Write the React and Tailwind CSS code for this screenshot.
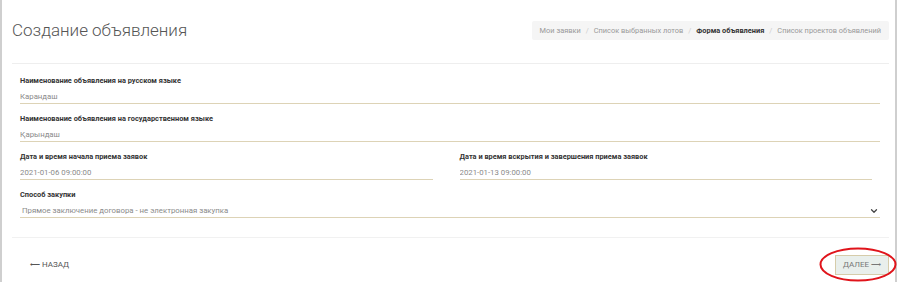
import { ChevronDown } from "lucide-react";

const FONT = { fontFamily: "Roboto, 'Noto Sans', sans-serif" };

const CRUMBS = [
  { label: "Мои заявки" },
  { label: "Список выбранных лотов" },
  { label: "Форма объявления", active: true },
  { label: "Список проектов объявлений" },
];

function Field({ label, value, children }) {
  return (
    <div className="flex flex-col">
      <div className="flex h-[12px] items-center text-[7.4px] font-bold text-[#333]">
        {label}
      </div>
      <div className="mt-[3px] flex h-[14px] items-center border-b border-[#ddd3b6] text-[7.8px] text-[#8a8a8a]">
        <span className="flex-1 truncate">{value}</span>
        {children}
      </div>
    </div>
  );
}

export default function App() {
  return (
    <div
      style={FONT}
      className="relative h-[282px] w-[900px] overflow-hidden bg-white"
    >
      <div className="flex h-full w-[897px] flex-col border-x-2 border-[#cfcfcf]">
        {/* Header */}
        <div className="ml-[10px] mr-[6px] flex h-[64px] items-center justify-between border-b border-[#eeeeee] pb-[2px]">
          <h1 className="text-[17px] font-light text-[#555]">
            Создание объявления
          </h1>
          <nav className="flex h-[19px] items-center rounded-[2px] bg-[#f5f5f5] px-[8px] text-[7.4px] text-[#999]">
            {CRUMBS.map((c, i) => (
              <span key={c.label} className="flex items-center">
                {i > 0 && <span className="mx-[5px] text-[#ccc]">/</span>}
                <span className={c.active ? "font-bold text-[#333]" : ""}>
                  {c.label}
                </span>
              </span>
            ))}
          </nav>
        </div>

        {/* Form */}
        <div className="ml-[10px] mr-[6px] flex flex-col gap-[9px] border-b border-[#f1f1f1] pb-[19px] pl-[8px] pr-[9px] pt-[11px]">
          <Field
            label="Наименование объявления на русском языке"
            value="Карандаш"
          />
          <Field
            label="Наименование объявления на государственном языке"
            value="Қарындаш"
          />
          <div className="mr-[8px] grid grid-cols-2 gap-x-[27px]">
            <Field
              label="Дата и время начала приема заявок"
              value="2021-01-06 09:00:00"
            />
            <Field
              label="Дата и время вскрытия и завершения приема заявок"
              value="2021-01-13 09:00:00"
            />
          </div>
          <Field
            label="Способ закупки"
            value={
              <span className="pl-[2px]">
                Прямое заключение договора - не электронная закупка
              </span>
            }
          >
            <ChevronDown size={10} strokeWidth={3} className="mr-[1px] text-[#444]" />
          </Field>
        </div>

        {/* Footer */}
        <div className="ml-[10px] mr-[6px] flex flex-1 items-center justify-between pb-[2px] pl-[18px] pt-[12px]">
          <button className="flex items-center gap-[2px] text-[8px] text-[#555]">
            <span className="text-[7px]">⟵</span>
            <span>НАЗАД</span>
          </button>
          <button className="flex h-[20px] w-[54px] items-center justify-center gap-[2px] border border-[#d6ccaa] bg-[#e9efec] text-[8px] text-[#777]">
            <span>ДАЛЕЕ</span>
            <span className="text-[7px]">⟶</span>
          </button>
        </div>
      </div>

      {/* red annotation ellipse */}
      <svg
        className="pointer-events-none absolute left-[819px] top-[247px]"
        width="78"
        height="35"
        viewBox="0 0 78 35"
      >
        <ellipse
          cx="39"
          cy="17.5"
          rx="37.5"
          ry="16"
          fill="none"
          stroke="#e0141b"
          strokeWidth="2"
        />
      </svg>
    </div>
  );
}
